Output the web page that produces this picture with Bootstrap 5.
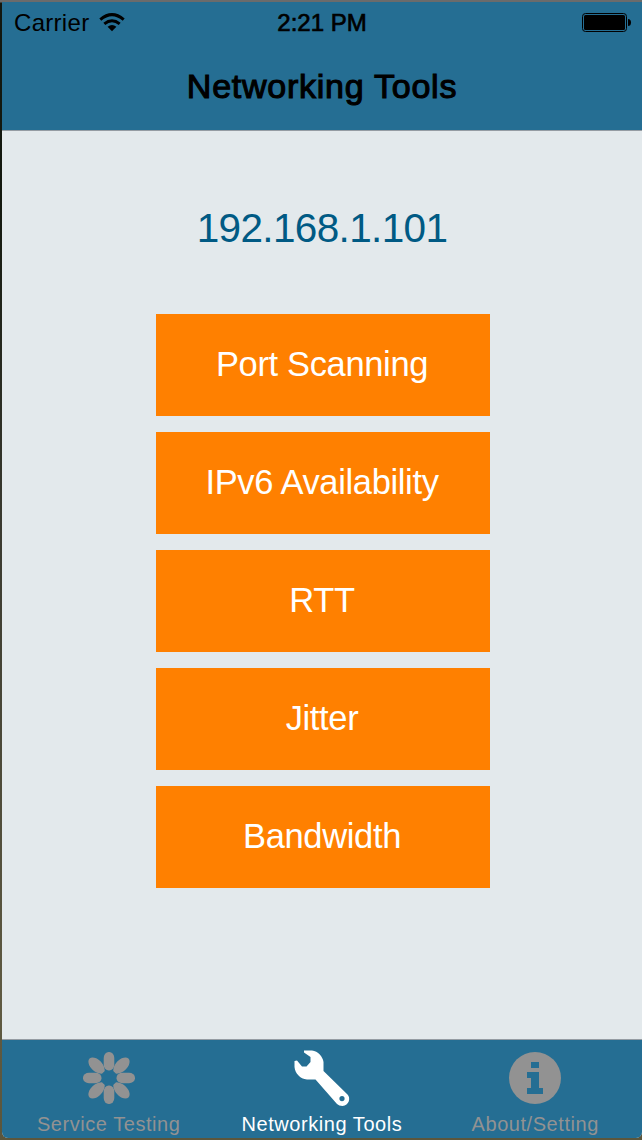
<!DOCTYPE html>
<html lang="en">
<head>
<meta charset="utf-8">
<meta name="viewport" content="width=device-width, initial-scale=1">
<title>Networking Tools</title>
<link href="https://cdn.jsdelivr.net/npm/bootstrap@5.3.0/dist/css/bootstrap.min.css" rel="stylesheet">
<style>
  html, body { height: 100%; }
  body { font-family: "Liberation Sans", Arial, sans-serif; background: #5f5a3f; overflow: hidden; line-height: 1; }
  .backdrop { height: 1140px; padding: 2px 0 2px 2px; background: linear-gradient(#6b6b6b 0 2px, #12170f 3px, #14190f 200px, #3a3a30 520px, #5f5a42 1000px, #5b563c); }
  .screen { background: #e3e9ec; border-radius: 0 0 6px 6px; overflow: hidden; }
  .bar { background: #256e93; color: #000; }
  .topbar { height: 129px; border-bottom: 1px solid #959ca3; }
  .status { height: 42px; padding: 0 0 0 12px; font-size: 24px; }
  .status > div { flex: 1 1 0; }
  .carrier { letter-spacing: .3px; }
  .medium { -webkit-text-stroke: .7px currentColor; }
  .clock { padding-right: 12px; }
  .heading { font-size: 34px; height: 84px; letter-spacing: .75px; -webkit-text-stroke-width: 1.1px; }
  .address { font-size: 40.5px; color: #005a84; margin: 76px 0 65px; line-height: 42px; letter-spacing: -.65px; }
  .tool-list { width: 334px; margin-left: 154px; gap: 16px; }
  .tool { --bs-btn-color: #fff; --bs-btn-bg: #ff8000; --bs-btn-hover-bg: #ee7700; --bs-btn-hover-color: #fff; height: 102px; font-size: 34.5px; line-height: 1; letter-spacing: -.35px; border: 0; padding: 0 2px 2px 0; }
  .tabs { height: 99px; border-top: 1px solid #959ca3; }
  .tab { color: #929292; font-size: 20px; letter-spacing: .55px; width: 213.3px; padding-top: 8px; text-decoration: none; }
  .tab svg { display: block; margin-bottom: 6px; }
</style>
</head>
<body>
<div class="backdrop">
  <div class="screen h-100 d-flex flex-column">
    <header class="bar topbar">
      <div class="status d-flex align-items-center">
        <div class="d-flex align-items-center">
          <span class="carrier">Carrier</span>
          <svg class="ms-2" width="30" height="20" viewBox="0 0 30 20" fill="none" stroke="#000">
            <path d="M3.300 6.600Q15 -3.400 26.700 6.600" stroke-width="3"/>
            <path d="M7.300 10.800Q15 4.600 22.700 10.800" stroke-width="3"/>
            <path d="M10.600 13.800Q15 10 19.400 13.800L15 18.200Z" fill="#000" stroke="none"/>
          </svg>
        </div>
        <div class="clock text-center medium">2:21 PM</div>
        <div class="d-flex justify-content-end">
          <svg width="60" height="20" viewBox="0 0 60 20">
            <rect x=".5" y=".5" width="44" height="18" rx="3" fill="none" stroke="#000"/>
            <rect x="2" y="2" width="41" height="15" rx="1.5"/>
            <path d="M46 6Q49 6 49 9.5T46 13Z"/>
          </svg>
        </div>
      </div>
      <h1 class="heading medium fw-normal m-0 d-flex align-items-center justify-content-center">Networking Tools</h1>
    </header>
    <main class="flex-grow-1">
      <div class="address text-center">192.168.1.101</div>
      <div class="tool-list d-flex flex-column">
        <button class="tool btn rounded-0" type="button">Port Scanning</button>
        <button class="tool btn rounded-0" type="button">IPv6 Availability</button>
        <button class="tool btn rounded-0" type="button">RTT</button>
        <button class="tool btn rounded-0" type="button">Jitter</button>
        <button class="tool btn rounded-0" type="button">Bandwidth</button>
      </div>
    </main>
    <nav class="bar tabs d-flex">
      <a class="tab d-flex flex-column align-items-center" href="#">
        <svg width="60" height="60" viewBox="-30 -30 60 60" fill="currentColor">
          <g id="pair"><rect x="-5.300" y="-26" width="10.600" height="18.500" rx="5" ry="6"/><rect x="-5.300" y="7.500" width="10.600" height="18.500" rx="5" ry="6"/></g>
          <use href="#pair" transform="rotate(90)"/>
          <g id="diagonal"><path id="petal" transform="rotate(45)" d="M-2-8C-6-12-6.500-18-5-23Q-3-27.500 0-27.500T5-23C6.500-18 6-12 2-8Z"/><use href="#petal" transform="rotate(180)"/></g>
          <use href="#diagonal" transform="rotate(90)"/>
        </svg>
        <span>Service Testing</span>
      </a>
      <a class="tab text-white d-flex flex-column align-items-center" href="#">
        <svg width="60" height="60" viewBox="0 0 60 60" fill="currentColor">
          <path fill-rule="evenodd" d="M12 2.500H20C26 3 31 9 31.500 14V23L55.500 46.500C59 50 57 57.500 50.500 58Q47 58 45 56L23.500 31.500H15C8 31 3 25 2.500 19V13L5 12.500L10 18.500H14.500L18.500 14V9L12 4.500ZM50 48A2.600 2.600 0 1 0 50 53.200A2.600 2.600 0 1 0 50 48Z"/>
        </svg>
        <span>Networking Tools</span>
      </a>
      <a class="tab d-flex flex-column align-items-center" href="#">
        <svg width="60" height="60" viewBox="0 0 60 60" fill="currentColor">
          <circle cx="30" cy="30" r="26"/>
          <path fill="#256e93" d="M26 14h8v6h-8zM22 24h12v16h4v6H22v-6h4V30h-4z"/>
        </svg>
        <span>About/Setting</span>
      </a>
    </nav>
  </div>
</div>
<script src="https://cdn.jsdelivr.net/npm/bootstrap@5.3.0/dist/js/bootstrap.bundle.min.js"></script>
</body>
</html>
